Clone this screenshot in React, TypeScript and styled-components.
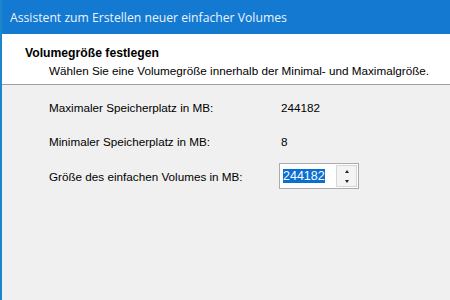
import React from 'react';
import styled, { createGlobalStyle } from 'styled-components';

const GlobalStyle = createGlobalStyle`
  html, body {
    margin: 0;
    padding: 0;
    background: #f0f0f0;
  }
`;

const Window = styled.div`
  width: 450px;
  height: 300px;
  display: flex;
  flex-direction: column;
  border-left: 2px solid #1b86c9;
  box-sizing: border-box;
  background: #f0f0f0;
  font-family: 'Liberation Sans', Arial, sans-serif;
  color: #000;
  overflow: hidden;
`;

const TitleBar = styled.div`
  height: 34px;
  flex: none;
  display: flex;
  align-items: center;
  padding-left: 10px;
  margin-left: -2px;
  background: #1479d1;
  color: #eaf4ff;
  font-family: 'Open Sans', 'Noto Sans', sans-serif;
  font-size: 12.2px;
  font-weight: 400;
  white-space: nowrap;
`;

const Header = styled.div`
  height: 51px;
  flex: none;
  box-sizing: border-box;
  background: #fff;
  border-bottom: 1px solid #a0a0a0;
  padding: 12px 0 0 23px;
  white-space: nowrap;
`;

const Heading = styled.div`
  font-size: 12.2px;
  font-weight: bold;
  line-height: 15px;
`;

const Subtitle = styled.div`
  font-size: 11.7px;
  line-height: 15px;
  margin-top: 2px;
  padding-left: 24px;
`;

const Body = styled.div`
  flex: 1;
  padding: 5px 0 0 47px;
`;

const Row = styled.div<{ $h: number }>`
  display: grid;
  grid-template-columns: 230px auto;
  align-items: center;
  height: ${(p) => p.$h}px;
  font-size: 11.7px;
  white-space: nowrap;
`;

const Value = styled.span`
  padding-left: 2px;
`;

const SpinBox = styled.div`
  display: flex;
  width: 80px;
  height: 26px;
  box-sizing: border-box;
  border: 1px solid #a9abaf;
  background: #fff;
`;

const SpinText = styled.div`
  flex: 1;
  display: flex;
  align-items: center;
  padding-left: 3px;
`;

const Selected = styled.span`
  background: #0a6fd0;
  color: #fff;
  line-height: 14px;
  font-size: 12.5px;
`;

const SpinButtons = styled.div`
  width: 19px;
  margin: 1px 1px 1px 0;
  display: flex;
  flex-direction: column;
  border: 1px solid #d6d6d6;
  background: #f4f4f4;
`;

const SpinButton = styled.div<{ $down?: boolean }>`
  flex: 1;
  display: flex;
  align-items: center;
  justify-content: center;
  &::after {
    content: '';
    width: 0;
    height: 0;
    border-left: 2.5px solid transparent;
    border-right: 2.5px solid transparent;
    ${(p) =>
      p.$down ? 'border-top: 3px solid #222;' : 'border-bottom: 3px solid #222;'}
  }
`;

export default function App() {
  return (
    <>
      <GlobalStyle />
      <Window>
        <TitleBar>Assistent zum Erstellen neuer einfacher Volumes</TitleBar>
        <Header>
          <Heading>Volumegröße festlegen</Heading>
          <Subtitle>Wählen Sie eine Volumegröße innerhalb der Minimal- und Maximalgröße.</Subtitle>
        </Header>
        <Body>
          <Row $h={34}>
            <span>Maximaler Speicherplatz in MB:</span>
            <Value>244182</Value>
          </Row>
          <Row $h={34}>
            <span>Minimaler Speicherplatz in MB:</span>
            <Value>8</Value>
          </Row>
          <Row $h={36}>
            <span>Größe des einfachen Volumes in MB:</span>
            <SpinBox>
              <SpinText>
                <Selected>244182</Selected>
              </SpinText>
              <SpinButtons>
                <SpinButton />
                <SpinButton $down />
              </SpinButtons>
            </SpinBox>
          </Row>
        </Body>
      </Window>
    </>
  );
}
